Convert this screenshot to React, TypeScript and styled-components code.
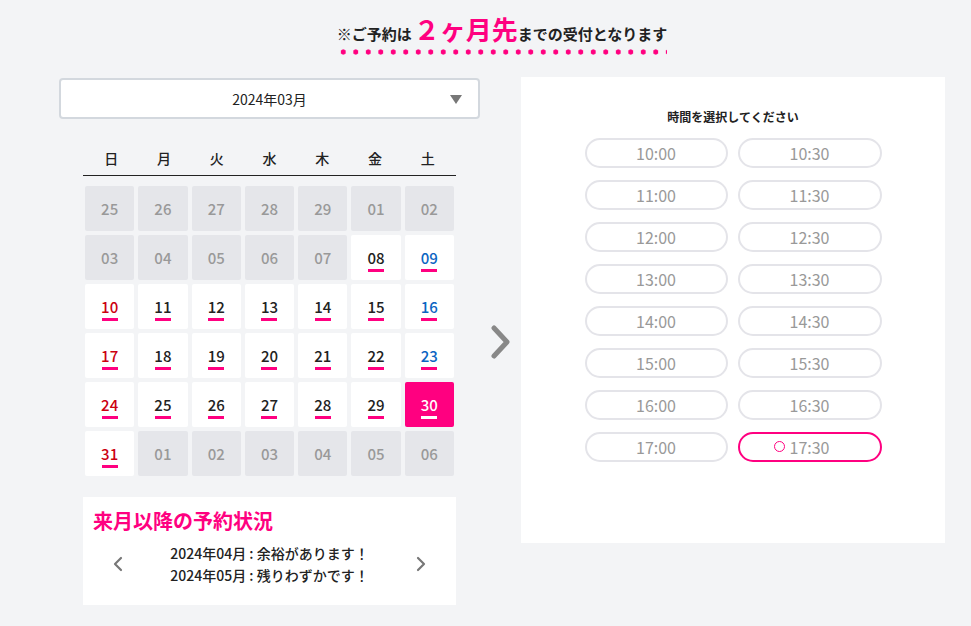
import React from "react";
import styled, { createGlobalStyle } from "styled-components";

const PINK = "#ff0080";

const GlobalStyle = createGlobalStyle`
  html, body { margin: 0; padding: 0; background: #f3f4f6; }
  body {
    font-family: "Noto Sans CJK JP", "Noto Sans", sans-serif;
    color: #222;
  }
  * { box-sizing: border-box; }
`;

const Page = styled.div`
  width: 971px;
  min-height: 626px;
  background: #f3f4f6;
  padding: 18px 0 0 59px;
`;

const Container = styled.div`
  width: 886px;
  display: flex;
  flex-direction: column;
  align-items: center;
`;

const Notice = styled.div`
  font-size: 15px;
  font-weight: 700;
  color: #222;
  line-height: 32px;
  padding-bottom: 5px;
  background-image: radial-gradient(circle, ${PINK} 2.3px, transparent 2.9px);
  background-size: 12.5px 6px;
  background-repeat: repeat-x;
  background-position: 0 bottom;
  white-space: nowrap;
`;

const Big = styled.span`
  font-size: 26px;
  line-height: 20px;
  color: ${PINK};
  margin-left: 2px;
`;

const Main = styled.div`
  margin-top: 23px;
  width: 100%;
  display: flex;
  align-items: flex-start;
`;

const LeftCol = styled.div`
  width: 421px;
  display: flex;
  flex-direction: column;
  align-items: center;
`;

const Select = styled.div`
  width: 421px;
  height: 41px;
  background: #fff;
  border: 2px solid #d3d8de;
  border-radius: 4px;
  display: flex;
  align-items: center;
  justify-content: center;
  position: relative;
  font-size: 14px;
  color: #222;
`;

const Caret = styled.span`
  position: absolute;
  right: 16px;
  top: 15px;
  width: 0;
  height: 0;
  border-left: 6px solid transparent;
  border-right: 6px solid transparent;
  border-top: 9px solid #777;
`;

const Calendar = styled.div`
  width: 373px;
  margin-top: 21px;
`;

const WeekRow = styled.div`
  display: grid;
  grid-template-columns: repeat(7, 1fr);
  height: 36px;
  border-bottom: 1px solid #222;
  padding: 0 2px;
  align-items: center;
`;

const WeekLabel = styled.div`
  text-align: center;
  font-size: 14px;
  font-weight: 500;
  color: #222;
`;

const DayGrid = styled.div`
  display: grid;
  grid-template-columns: repeat(7, 1fr);
  grid-auto-rows: 45px;
  gap: 4px;
  margin-top: 10px;
  padding: 0 2px;
`;

type Tone = "muted" | "normal" | "sun" | "sat" | "selected";

const toneColor: Record<Tone, string> = {
  muted: "#999",
  normal: "#222",
  sun: "#cc0010",
  sat: "#0a64c2",
  selected: "#fff",
};

const Cell = styled.div<{ $tone: Tone }>`
  border-radius: 2px;
  background: ${(p) =>
    p.$tone === "muted" ? "#e5e6ea" : p.$tone === "selected" ? PINK : "#fff"};
  color: ${(p) => toneColor[p.$tone]};
  display: flex;
  flex-direction: column;
  align-items: center;
  justify-content: center;
  gap: 2px;
  padding-top: ${(p) => (p.$tone === "muted" ? "0" : "5px")};
  font-size: 15px;
  font-weight: 500;
  line-height: 18px;
`;

const Bar = styled.span<{ $light: boolean }>`
  width: 16px;
  height: 3px;
  background: ${(p) => (p.$light ? "#fff" : PINK)};
`;

const Status = styled.div`
  width: 373px;
  height: 108px;
  margin-top: 21px;
  background: #fff;
  padding: 10px 10px 0;
`;

const StatusTitle = styled.div`
  color: ${PINK};
  font-size: 20px;
  font-weight: 700;
  line-height: 28px;
`;

const StatusBody = styled.div`
  display: flex;
  align-items: center;
  justify-content: space-between;
  padding: 0 20px 0 20px;
  margin-top: 7px;
`;

const StatusLines = styled.div`
  font-size: 14px;
  font-weight: 500;
  line-height: 22px;
  text-align: left;
  color: #222;
`;

const Nav = styled.svg`
  width: 10px;
  height: 16px;
`;

const ArrowCol = styled.div`
  width: 41px;
  align-self: stretch;
  display: flex;
  justify-content: center;
  padding-top: 247px;
`;

const BigArrow = styled.svg`
  width: 22px;
  height: 36px;
`;

const RightPanel = styled.div`
  width: 424px;
  height: 466px;
  margin-top: -1px;
  background: #fff;
  display: flex;
  flex-direction: column;
  align-items: center;
  padding-top: 31px;
`;

const PanelTitle = styled.div`
  font-size: 12px;
  font-weight: 700;
  line-height: 18px;
  color: #222;
`;

const Slots = styled.div`
  margin-top: 12px;
  display: grid;
  grid-template-columns: 143px 144px;
  column-gap: 10px;
  row-gap: 12px;
`;

const Slot = styled.div<{ $active: boolean }>`
  height: 30px;
  border-radius: 15px;
  border: 2px solid ${(p) => (p.$active ? PINK : "#e4e4e9")};
  display: flex;
  align-items: center;
  justify-content: center;
  font-family: "Noto Sans CJK JP", "Noto Sans", sans-serif;
  font-size: 16px;
  color: #999;
`;

const SlotText = styled.span`
  position: relative;
  line-height: 20px;
`;

const Ring = styled.span`
  position: absolute;
  left: -16px;
  top: 4px;
  width: 11px;
  height: 11px;
  border-radius: 50%;
  border: 1.5px solid ${PINK};
`;

const weeks = ["日", "月", "火", "水", "木", "金", "土"];

type Day = { n: string; tone: Tone };

const build = (): Day[] => {
  const days: Day[] = [];
  ["25", "26", "27", "28", "29", "01", "02", "03", "04", "05", "06", "07"].forEach((n) =>
    days.push({ n, tone: "muted" })
  );
  for (let d = 8; d <= 31; d++) {
    const idx = days.length % 7;
    let tone: Tone = "normal";
    if (idx === 0) tone = "sun";
    if (idx === 6) tone = "sat";
    if (d === 30) tone = "selected";
    days.push({ n: String(d).padStart(2, "0"), tone });
  }
  ["01", "02", "03", "04", "05", "06"].forEach((n) => days.push({ n, tone: "muted" }));
  return days;
};

const times = [
  "10:00", "10:30", "11:00", "11:30", "12:00", "12:30", "13:00", "13:30",
  "14:00", "14:30", "15:00", "15:30", "16:00", "16:30", "17:00", "17:30",
];

export default function App() {
  const days = build();
  return (
    <Page>
      <GlobalStyle />
      <Container>
        <Notice>
          ※ご予約は<Big>２ヶ月先</Big>までの受付となります
        </Notice>
        <Main>
          <LeftCol>
            <Select>
              2024年03月
              <Caret />
            </Select>
            <Calendar>
              <WeekRow>
                {weeks.map((w) => (
                  <WeekLabel key={w}>{w}</WeekLabel>
                ))}
              </WeekRow>
              <DayGrid>
                {days.map((d, i) => (
                  <Cell key={i} $tone={d.tone}>
                    {d.n}
                    {d.tone !== "muted" && <Bar $light={d.tone === "selected"} />}
                  </Cell>
                ))}
              </DayGrid>
            </Calendar>
            <Status>
              <StatusTitle>来月以降の予約状況</StatusTitle>
              <StatusBody>
                <Nav viewBox="0 0 10 16">
                  <polyline points="8,2 2,8 8,14" fill="none" stroke="#777" strokeWidth="2.2" strokeLinecap="round" strokeLinejoin="round" />
                </Nav>
                <StatusLines>
                  2024年04月 : 余裕があります！
                  <br />
                  2024年05月 : 残りわずかです！
                </StatusLines>
                <Nav viewBox="0 0 10 16">
                  <polyline points="2,2 8,8 2,14" fill="none" stroke="#777" strokeWidth="2.2" strokeLinecap="round" strokeLinejoin="round" />
                </Nav>
              </StatusBody>
            </Status>
          </LeftCol>
          <ArrowCol>
            <BigArrow viewBox="0 0 22 36">
              <polyline points="4,3 17,17 4,31" fill="none" stroke="#888" strokeWidth="5" strokeLinecap="round" strokeLinejoin="round" />
            </BigArrow>
          </ArrowCol>
          <RightPanel>
            <PanelTitle>時間を選択してください</PanelTitle>
            <Slots>
              {times.map((t) => (
                <Slot key={t} $active={t === "17:30"}>
                  <SlotText>
                    {t === "17:30" && <Ring />}
                    {t}
                  </SlotText>
                </Slot>
              ))}
            </Slots>
          </RightPanel>
        </Main>
      </Container>
    </Page>
  );
}
